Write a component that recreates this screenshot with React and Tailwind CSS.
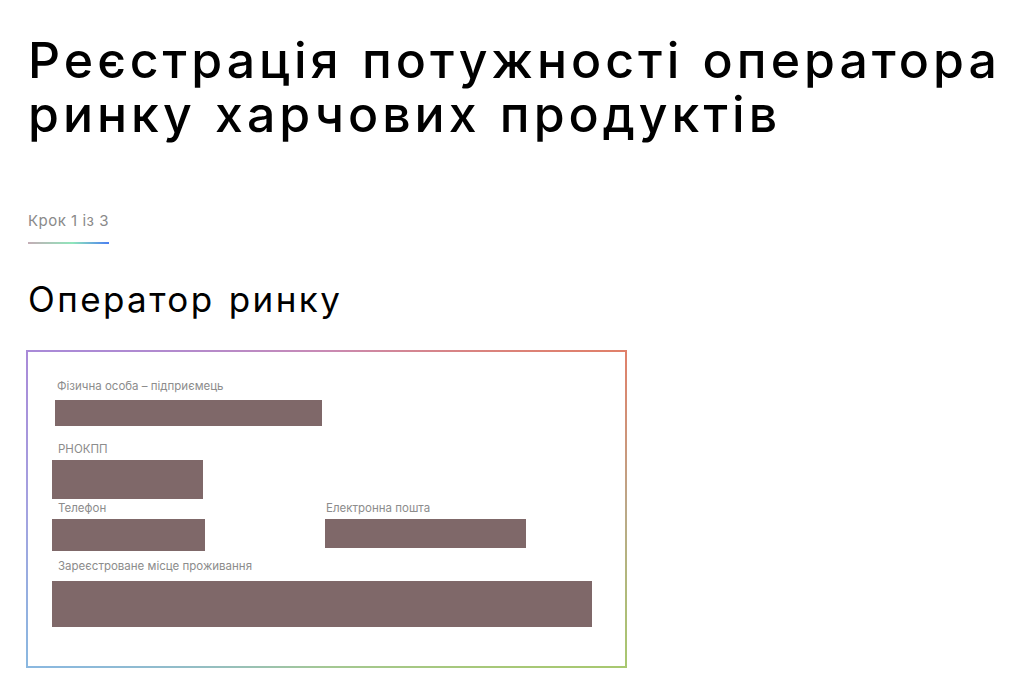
import React from "react";

const font = { fontFamily: "Inter, 'Noto Sans', sans-serif" };

const Redacted = ({ className }) => <div className={`bg-[#7f6869] ${className}`} />;

const Label = ({ children, className = "" }) => (
  <div className={`text-[11.5px] leading-4 text-[#8c8c8c] ${className}`}>{children}</div>
);

const App = () => {
  return (
    <div className="min-h-screen bg-white text-black" style={font}>
      <div className="pl-[28px] pt-[33px]">
        <h1 className="text-[50px] leading-[54px] font-medium tracking-[4px] [word-spacing:2px]">
          <span className="block">Реєстрація потужності оператора</span>
          <span className="block">ринку харчових продуктів</span>
        </h1>

        <div className="mt-[70px] text-[15px] leading-5 text-[#8a8a8a] tracking-[0.5px]">Крок 1 із 3</div>
        <div className="mt-[11px] h-[2px] w-[81px] bg-[linear-gradient(to_right,#c4adb6,#8fe6bb_55%,#4b7ff2)]" />

        <h2 className="mt-[33px] text-[35px] leading-[44px] font-normal tracking-[2.4px] [word-spacing:2px]">Оператор ринку</h2>

        <div className="mt-[29px] -ml-[2px] w-[601px] p-[2px] bg-[conic-gradient(#c98ab4_0deg,#e0806a_62deg,#bba888_90deg,#a8c870_118deg,#a4c894_180deg,#8ab8e0_242deg,#a4a2e0_270deg,#a98ad8_298deg,#c98ab4_360deg)]">
          <div className="bg-white pl-[24px] pt-[26px] pb-[39px]">
            <Label className="pl-[5px]">Фізична особа – підприємець</Label>
            <Redacted className="mt-[6px] ml-[3px] h-[26px] w-[267px]" />

            <Label className="mt-[15px] pl-[6px]">РНОКПП</Label>
            <Redacted className="mt-[3px] h-[39px] w-[151px]" />

            <div className="mt-px flex">
              <div className="w-[273px]">
                <Label className="pl-[6px]">Телефон</Label>
                <Redacted className="mt-[3px] h-[32px] w-[153px]" />
              </div>
              <div>
                <Label className="pl-[1px]">Електронна пошта</Label>
                <Redacted className="mt-[3px] h-[29px] w-[201px]" />
              </div>
            </div>

            <Label className="mt-[7px] pl-[6px]">Зареєстроване місце проживання</Label>
            <Redacted className="mt-[7px] h-[46px] w-[540px]" />
          </div>
        </div>
      </div>
    </div>
  );
};

export default App;
